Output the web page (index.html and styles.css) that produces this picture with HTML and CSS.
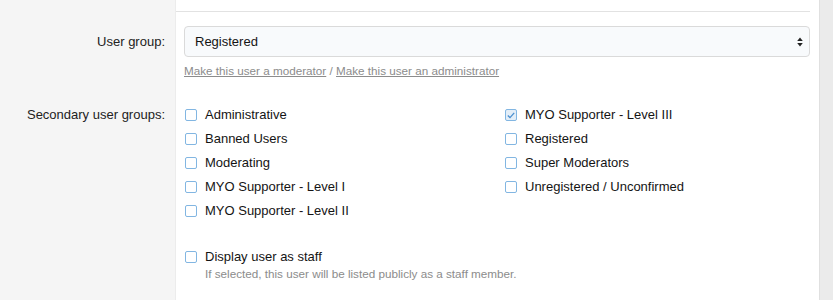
FILE: index.html
```html
<!DOCTYPE html>
<html>
<head>
<meta charset="utf-8">
<link rel="stylesheet" href="styles.css">
</head>
<body>
<div class="block">
  <div class="row row-top">
    <div class="label"></div>
    <div class="field field-top"></div>
  </div>
  <div class="row row-group">
    <div class="label">User group:</div>
    <div class="field">
      <div class="select">
        <span>Registered</span>
        <svg class="arrows" width="6" height="10" viewBox="0 0 6 10"><path d="M3 0.5 L5.8 4 H0.2 Z M3 9.5 L5.8 6 H0.2 Z" fill="#222"/></svg>
      </div>
      <div class="explain"><a href="#">Make this user a moderator</a> / <a href="#">Make this user an administrator</a></div>
    </div>
  </div>
  <div class="row row-secondary">
    <div class="label">Secondary user groups:</div>
    <div class="field">
      <div class="checks">
        <div class="check"><span class="box"></span>Administrative</div>
        <div class="check"><span class="box"></span>Banned Users</div>
        <div class="check"><span class="box"></span>Moderating</div>
        <div class="check"><span class="box"></span>MYO Supporter - Level I</div>
        <div class="check"><span class="box"></span>MYO Supporter - Level II</div>
        <div class="check"><span class="box checked"><svg width="8" height="7" viewBox="0 0 8 7"><path d="M0.8 3.6 L3 5.6 L7.2 0.9" fill="none" stroke="#4a8fcf" stroke-width="1.3"/></svg></span>MYO Supporter - Level III</div>
        <div class="check"><span class="box"></span>Registered</div>
        <div class="check"><span class="box"></span>Super Moderators</div>
        <div class="check"><span class="box"></span>Unregistered / Unconfirmed</div>
      </div>
      <div class="staff">
        <div class="check check-staff"><span class="box"></span>Display user as staff</div>
        <div class="hint">If selected, this user will be listed publicly as a staff member.</div>
      </div>
    </div>
  </div>
</div>
</body>
</html>
```
FILE: styles.css
```css
html, body {
  margin: 0;
  padding: 0;
}
body {
  background: #ebebeb;
  font-family: "Liberation Sans", Arial, sans-serif;
  font-size: 13px;
  color: #141414;
  height: 300px;
  overflow: hidden;
}
.block {
  width: 819px;
  background: #fff;
  border-right: 1px solid #e0e0e0;
  height: 300px;
  display: flex;
  flex-direction: column;
  overflow: hidden;
}
.row {
  display: grid;
  grid-template-columns: 176px 1fr;
}
.row-secondary {
  flex: 1;
}
.label {
  background: #f5f5f5;
  border-right: 1px solid #ececec;
  text-align: right;
  padding-right: 10px;
  color: #222;
  box-sizing: border-box;
}
.field {
  padding: 0 9px 0 8px;
}
.field-top {
  height: 11px;
  border-bottom: 1px solid #e2e2e2;
  margin-right: 9px;
  padding: 0;
}
.row-group .label {
  padding-top: 14px;
  line-height: 31px;
}
.row-group .field {
  padding-top: 14px;
}
.select {
  height: 31px;
  box-sizing: border-box;
  border: 1px solid #dadada;
  border-radius: 4px;
  background: #f8fafc;
  display: flex;
  align-items: center;
  justify-content: space-between;
  padding: 0 6px 0 10px;
  font-size: 13px;
  color: #141414;
}
.explain {
  margin-top: 6px;
  font-size: 11.7px;
  line-height: 16px;
  color: #8c8c8c;
}
.explain a {
  color: #8c8c8c;
  text-decoration: underline;
}
.row-secondary .label {
  padding-top: 24px;
  line-height: 24px;
}
.row-secondary .field {
  padding-top: 24px;
}
.checks {
  display: grid;
  grid-template-columns: 320px 320px;
  grid-template-rows: repeat(5, 24px);
  grid-auto-flow: column;
}
.check {
  display: flex;
  align-items: center;
  line-height: 24px;
  white-space: nowrap;
}
.box {
  width: 12px;
  height: 12px;
  box-sizing: border-box;
  border: 1px solid #82b6e2;
  border-radius: 2px;
  background: #fff;
  margin-right: 8px;
  margin-left: 1px;
  display: flex;
  align-items: center;
  justify-content: center;
}
.box.checked {
  background: #e3eef8;
}
.staff {
  margin-top: 25px;
}
.check-staff {
  line-height: 18px;
}
.hint {
  margin-top: 1px;
  padding-left: 21px;
  font-size: 11.7px;
  line-height: 14px;
  color: #8c8c8c;
}
```
